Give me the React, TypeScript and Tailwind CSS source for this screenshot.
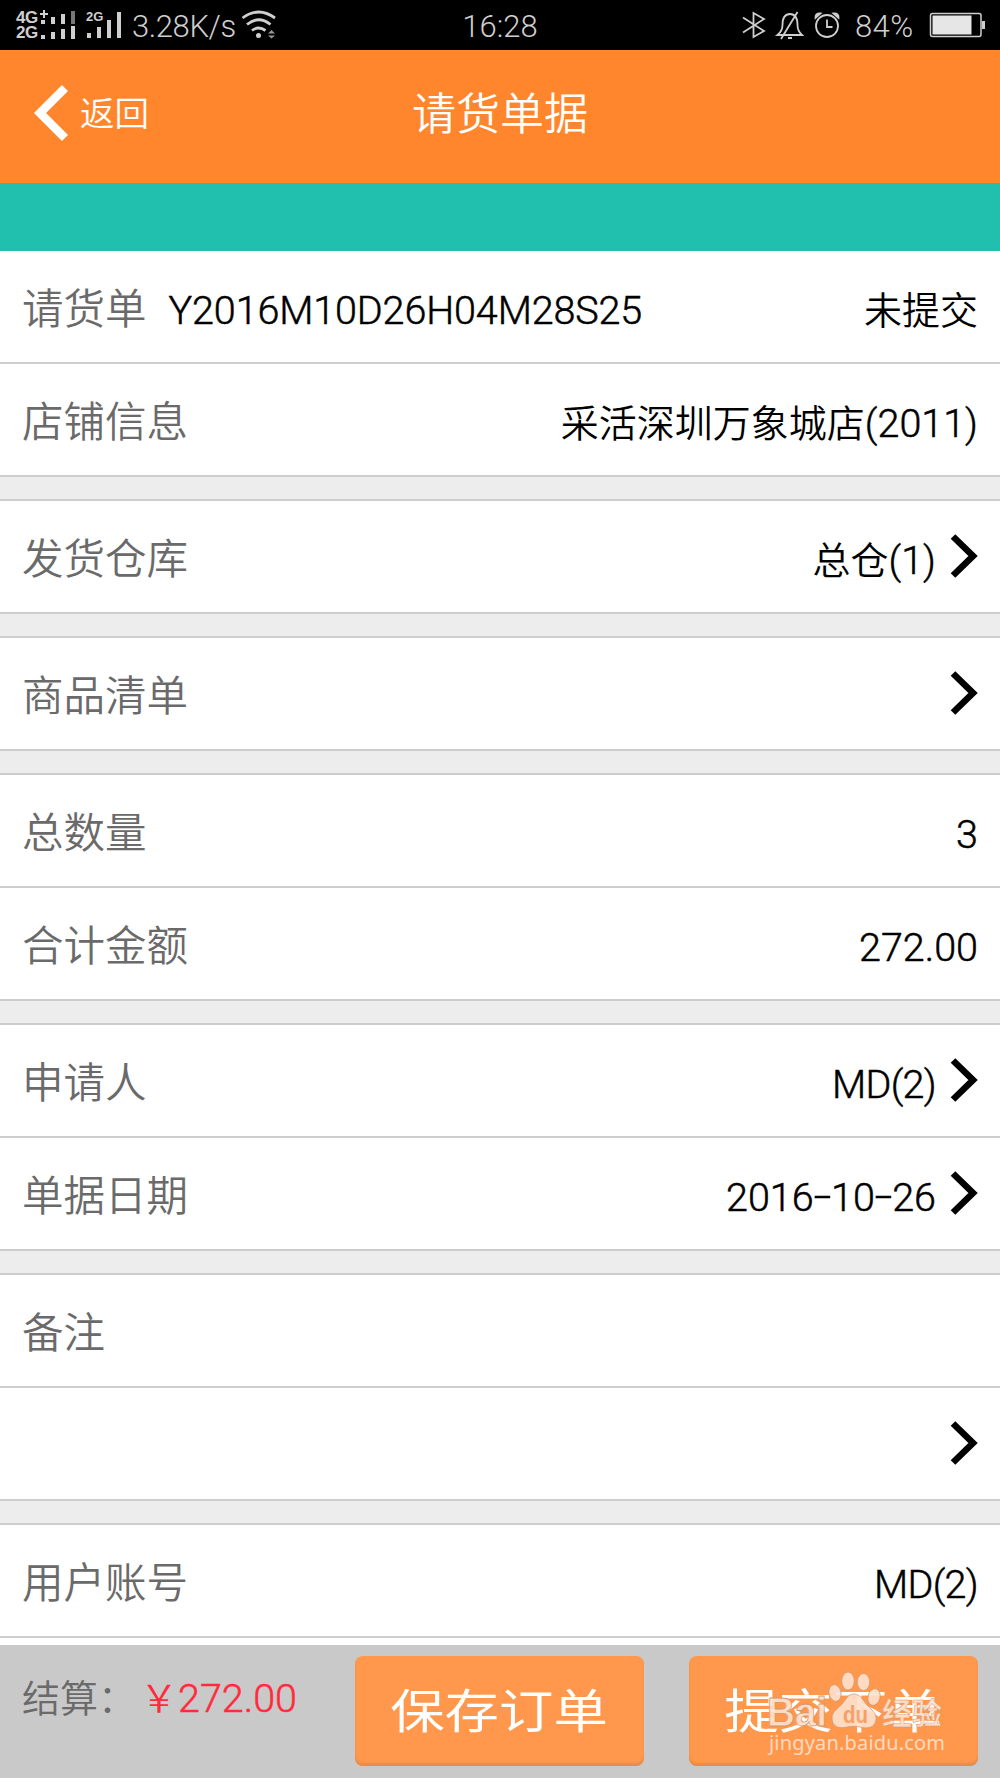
import React from "react";

type RowProps = {
  label?: string;
  code?: string;
  value?: string;
  arrow?: boolean;
};

function Arrow() {
  return (
    <svg className="ml-[12px] mt-[-2px] h-[46px] w-[30px] shrink-0" viewBox="0 0 30 46">
      <path d="M5 3.500 L25 23 L5 42.500" fill="none" stroke="#000" strokeWidth="6.600" />
    </svg>
  );
}

/* Latin runs use Roboto a little larger than the Chinese text; date hyphens are widened. */
function Mixed({ text }: { text: string }) {
  const runs = text.match(/[\u3000-\uffff]+|-|[^\u3000-\uffff-]+/g) ?? [];
  return (
    <>
      {runs.map((run, i) => {
        if (run === "-") {
          return (
            <span key={i} className="mx-[3px] inline-block -translate-y-[2px] scale-x-[1.6] font-['Roboto'] text-[39.5px] font-light leading-[50px] [-webkit-text-stroke:0.5px]">
              -
            </span>
          );
        }
        if (run.charCodeAt(0) >= 0x3000) return <span key={i}>{run}</span>;
        return (
          <span key={i} className="font-['Roboto'] text-[39.5px] font-light leading-[50px] [-webkit-text-stroke:0.5px]">
            {run}
          </span>
        );
      })}
    </>
  );
}

function Row({ label, code, value, arrow }: RowProps) {
  return (
    <div className="flex h-[113px] shrink-0 items-center border-b-2 border-[#cdcdcd] bg-white pl-[22px] pr-[22px]">
      {label && <span className="mt-[-2px] text-[41.5px] leading-[60px] text-[#6a6a6a]">{label}</span>}
      {code && (
        <span className="ml-[22px] mt-[2px] text-[38px] leading-[60px] tracking-[-0.12px] text-black">
          <Mixed text={code} />
        </span>
      )}
      <span className="flex-1" />
      {value && (
        <span className={"mt-[2px] whitespace-nowrap text-[38px] leading-[60px] text-black " + (value.startsWith("MD") ? "tracking-[-0.7px]" : "")}>
          <Mixed text={value} />
        </span>
      )}
      {arrow && <Arrow />}
    </div>
  );
}

function Gap() {
  return <div className="h-[24px] shrink-0 border-b-2 border-[#cdcdcd] bg-[#ededed]" />;
}

function StatusBar() {
  return (
    <div className="grid h-[50px] shrink-0 grid-cols-3 items-center bg-black text-[#cfcfcf]">
      <div className="flex h-[50px] items-center">
        <div className="ml-[16px] flex w-[23px] flex-col font-['Liberation_Sans'] text-[17px] font-bold leading-[15px] tracking-[-0.5px]">
          <span>4G</span>
          <span>2G</span>
        </div>
        <svg className="h-[50px] w-[38px]" viewBox="39 0 38 50" fill="#cfcfcf">
          <path d="M40 13h8v2h-8zM43 10h2v8h-2z" />
          <rect x="41" y="20" width="4" height="4" />
          <rect x="51" y="17" width="4" height="7" />
          <rect x="61" y="14" width="4" height="10" />
          <rect x="71" y="11" width="4" height="13" fill="#777" />
          <rect x="41" y="35" width="4" height="4" />
          <rect x="51" y="32" width="4" height="7" />
          <rect x="61" y="29" width="4" height="10" />
          <rect x="71" y="26" width="4" height="13" />
        </svg>
        <div className="relative ml-[9px] h-[50px] w-[38px]">
          <svg className="h-[50px] w-[38px]" viewBox="86 0 38 50" fill="#cfcfcf">
            <rect x="87" y="33" width="4" height="5" />
            <rect x="97" y="27" width="4" height="11" />
            <rect x="107" y="20" width="4" height="18" />
            <rect x="117" y="12" width="4" height="26" />
          </svg>
          <span className="absolute left-0 top-[10px] font-['Liberation_Sans'] text-[13px] font-bold leading-[14px]">2G</span>
        </div>
        <span className="ml-[8px] mt-[3px] w-[108px] whitespace-nowrap font-['Roboto'] text-[31px] font-light leading-[40px] tracking-[-0.4px]">3.28K/s</span>
        <svg className="h-[50px] w-[38px]" viewBox="240 0 38 50" fill="none" stroke="#cfcfcf" strokeWidth="2.8">
          <path d="M242.500 18 Q258.500 6 275 18M247 24.500 Q258.500 15 270.500 24.500M252 30.500 Q258.500 25.500 265.500 30.500" />
          <circle cx="258.500" cy="35.500" r="2.500" fill="#cfcfcf" stroke="none" />
          <path d="M268 33.500l3.500-3.500 3.500 3.500zM268 35.500h7l-3.500 3z" fill="#999" stroke="none" />
        </svg>
      </div>
      <div className="mt-[4px] text-center font-['Roboto'] text-[31px] font-light leading-[40px]">16:28</div>
      <div className="flex items-center justify-end">
        <svg className="h-[50px] w-[126px]" viewBox="742 0 126 50" fill="none" stroke="#cfcfcf" strokeWidth="1.800">
          <path d="M743 17.500 L764 31 L753.500 37 V13 L764 19 L743 32.500" />
          <path d="M777.500 35 H802 Q797.500 31 797.500 25 Q797.500 14 790 14 Q782.500 14 782.500 25 Q782.500 31 777.500 35ZM797.500 12 L781 39M788 38h4" />
          <circle cx="827" cy="26" r="11" />
          <path d="M827 19.500v7.500h5.500" />
          <path d="M815.500 18 Q815 13 820.500 13.500ZM838.500 18 Q839 13 833.500 13.500Z" fill="#cfcfcf" />
        </svg>
        <span className="-ml-[13px] mt-[4px] w-[60px] whitespace-nowrap font-['Roboto'] text-[31px] font-light leading-[40px] tracking-[0.4px]">84%</span>
        <svg className="ml-[13px] mr-[14px] h-[50px] w-[58px]" viewBox="928 0 58 50">
          <rect x="930.500" y="13.500" width="50.500" height="23" rx="2" fill="none" stroke="#cfcfcf" strokeWidth="1.500" />
          <rect x="932.500" y="15.500" width="39" height="19" fill="#e6e6e6" />
          <rect x="982" y="21" width="3" height="8" fill="#cfcfcf" />
        </svg>
      </div>
    </div>
  );
}

function Button({ text }: { text: string }) {
  return (
    <div className="flex h-[110px] w-[289px] items-center justify-center rounded-[8px] bg-[#ff974d] pb-[6px] pr-[2px] shadow-[inset_0_-3px_2px_#e98c4a]">
      <span className="block scale-x-[1.17] whitespace-nowrap text-[46.500px] font-normal leading-[60px] text-white">{text}</span>
    </div>
  );
}

function Watermark() {
  return (
    <svg className="absolute bottom-[4px] left-[757px] h-[110px] w-[200px]" viewBox="757 1664 200 110" fill="#ffe0cb" stroke="#d1976f" strokeWidth="0.800">
      <g opacity="0.92">
        <text x="767" y="1726" fontFamily="Liberation Sans" fontWeight="bold" fontSize="40" textLength="60" lengthAdjust="spacingAndGlyphs">Bai</text>
        <ellipse cx="848" cy="1681" rx="6.300" ry="9" />
        <ellipse cx="863.500" cy="1682" rx="6.300" ry="8.500" />
        <ellipse cx="835" cy="1693" rx="6" ry="8.500" transform="rotate(-12 835 1693)" />
        <ellipse cx="874" cy="1697" rx="6" ry="8.500" transform="rotate(14 874 1697)" />
        <path d="M854 1694 C860 1694 863 1700 867 1705 C873 1711 877 1714 876 1720 C875 1728 867 1729 860 1727 C856 1726 851 1726 847 1727 C839 1729 832 1727 832 1718 C832 1711 839 1708 843 1703 C846 1699 848 1694 854 1694Z" />
        <text x="843" y="1723" fill="#f3a269" stroke="none" fontFamily="Liberation Sans" fontWeight="bold" fontSize="23" textLength="25" lengthAdjust="spacingAndGlyphs">du</text>
        <text x="882" y="1724" strokeWidth="0.500" fontFamily="Noto Sans CJK SC" fontWeight="bold" fontSize="30" textLength="60" lengthAdjust="spacingAndGlyphs">经验</text>
        <text x="769" y="1750" stroke="none" fontFamily="Noto Sans" fontWeight="400" fontSize="20" textLength="176" lengthAdjust="spacing">jingyan.baidu.com</text>
      </g>
    </svg>
  );
}

export default function App() {
  return (
    <div className="flex h-[1778px] w-[1000px] flex-col overflow-hidden bg-white font-['Noto_Sans_CJK_SC',sans-serif] font-[350]">
      <StatusBar />
      <header className="grid h-[133px] shrink-0 grid-cols-3 items-center bg-[#ff862c] pb-[7px] text-white">
        <div className="flex items-center pl-[33px]">
          <svg className="h-[58px] w-[36px]" viewBox="33 84 36 58">
            <path d="M65 88 L40 113 L65 138" fill="none" stroke="#fff" strokeWidth="8.500" />
          </svg>
          <span className="ml-[11px] mt-[-4px] text-[34.500px] leading-[50px]">返回</span>
        </div>
        <h1 className="mt-[-4px] text-center text-[44px] font-[350] leading-[60px]">请货单据</h1>
      </header>
      <div className="h-[68px] shrink-0 bg-[#20bfae]" />
      <main className="flex min-h-0 flex-1 flex-col overflow-hidden">
        <Row label="请货单" code="Y2016M10D26H04M28S25" value="未提交" />
        <Row label="店铺信息" value="采活深圳万象城店(2011)" />
        <Gap />
        <Row label="发货仓库" value="总仓(1)" arrow />
        <Gap />
        <Row label="商品清单" arrow />
        <Gap />
        <Row label="总数量" value="3" />
        <Row label="合计金额" value="272.00" />
        <Gap />
        <Row label="申请人" value="MD(2)" arrow />
        <Row label="单据日期" value="2016-10-26" arrow />
        <Gap />
        <Row label="备注" />
        <Row arrow />
        <Gap />
        <Row label="用户账号" value="MD(2)" />
      </main>
      <footer className="relative flex h-[133px] shrink-0 items-start bg-[#c9c9c9] pl-[22px] pt-[11px]">
        <div className="mt-[10px] flex w-[333px] whitespace-nowrap text-[38px] leading-[60px]">
          <span className="w-[118px] text-[#6a6a6a]">结算：</span>
          <span className="text-[#ff2b3c]">
            <Mixed text="￥272.00" />
          </span>
        </div>
        <Button text="保存订单" />
        <div className="ml-[45px]">
          <Button text="提交下单" />
        </div>
        <Watermark />
      </footer>
    </div>
  );
}
